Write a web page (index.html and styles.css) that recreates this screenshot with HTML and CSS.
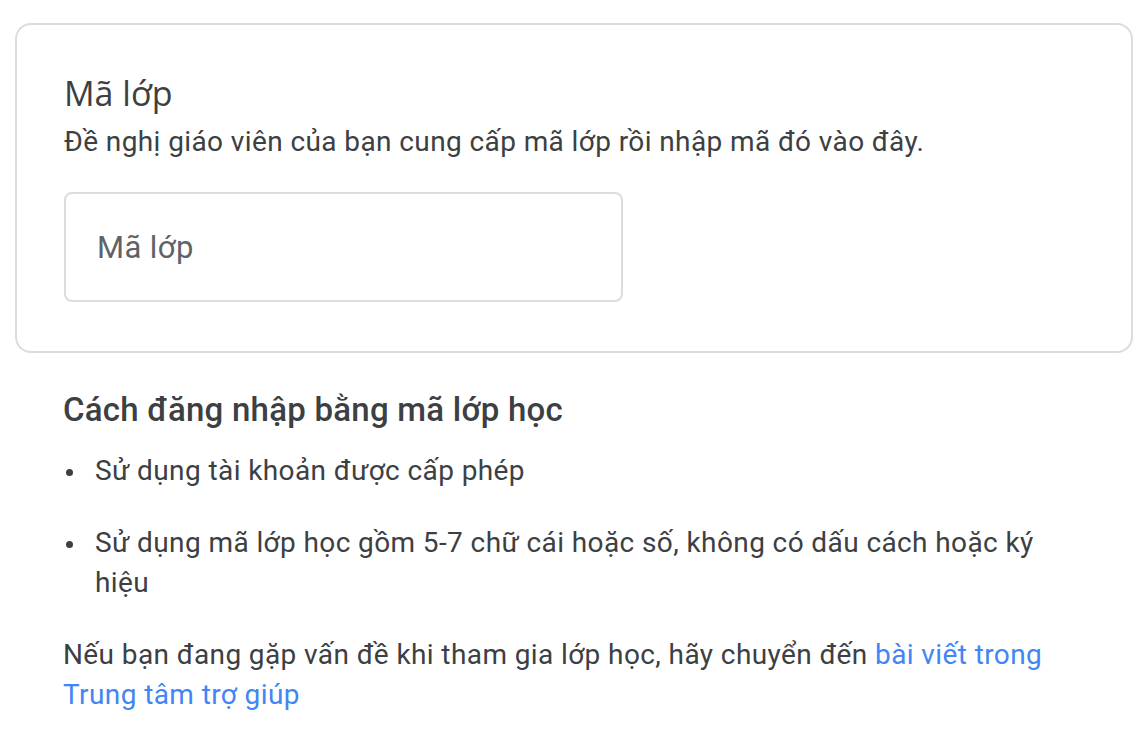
FILE: index.html
```html
<!DOCTYPE html>
<html lang="vi">
<head>
<meta charset="utf-8">
<link rel="stylesheet" href="styles.css">
</head>
<body>
<div class="page">
  <section class="card">
    <h1 class="card-title">Mã lớp</h1>
    <p class="card-sub">Đề nghị giáo viên của bạn cung cấp mã lớp rồi nhập mã đó vào đây.</p>
    <div class="field"><span class="placeholder">Mã lớp</span></div>
  </section>
  <section class="help">
    <h2 class="help-title">Cách đăng nhập bằng mã lớp học</h2>
    <ul class="help-list">
      <li>Sử dụng tài khoản được cấp phép</li>
      <li>Sử dụng mã lớp học gồm 5-7 chữ cái hoặc số, không có dấu cách hoặc ký hiệu</li>
    </ul>
    <p class="help-text">Nếu bạn đang gặp vấn đề khi tham gia lớp học, hãy chuyển đến <a class="link" href="#">bài viết trong Trung tâm trợ giúp</a></p>
  </section>
</div>
</body>
</html>
```

FILE: styles.css
```css
html, body {
  margin: 0;
  padding: 0;
  background: #ffffff;
}
body {
  font-family: Roboto, "Noto Sans", sans-serif;
  color: #3c4043;
  letter-spacing: 0.4px;
}
.page {
  padding: 23px 11px 0 15px;
}
.card {
  border: 2px solid #dadce0;
  border-radius: 16px;
  padding: 46px 47px 49px 47px;
}
.card-title {
  margin: 0;
  font-family: "Open Sans", Roboto, sans-serif;
  font-weight: 400;
  font-size: 34px;
  line-height: 44px;
  letter-spacing: 0;
  color: #3c4043;
}
.card-sub {
  margin: 7px 0 0;
  font-size: 28px;
  line-height: 40px;
  color: #3c4043;
}
.field {
  margin-top: 30px;
  width: 559px;
  height: 110px;
  border: 2px solid #dadce0;
  border-radius: 8px;
  display: flex;
  align-items: center;
  padding-left: 31px;
  box-sizing: border-box;
}
.placeholder {
  font-size: 31px;
  color: #5f6368;
}
.help {
  padding: 37px 48px 0 48px;
}
.help-title {
  margin: 0;
  font-family: Roboto, "Open Sans", sans-serif;
  font-weight: 500;
  font-size: 33px;
  line-height: 40px;
  letter-spacing: 0.25px;
  color: #3c4043;
}
.help-list {
  margin: 21px 0 0;
  padding: 0;
  list-style: none;
  font-size: 28px;
  line-height: 40px;
}
.help-list li {
  display: flex;
  margin-bottom: 32px;
}
.help-list li::before {
  content: "";
  flex-shrink: 0;
  width: 7px;
  height: 7px;
  border-radius: 50%;
  background: #3c4043;
  margin: 18px 22px 0 3px;
}
.help-text {
  margin: 0;
  font-size: 28px;
  line-height: 40px;
}
.link {
  color: #4285f4;
  text-decoration: none;
}
```
